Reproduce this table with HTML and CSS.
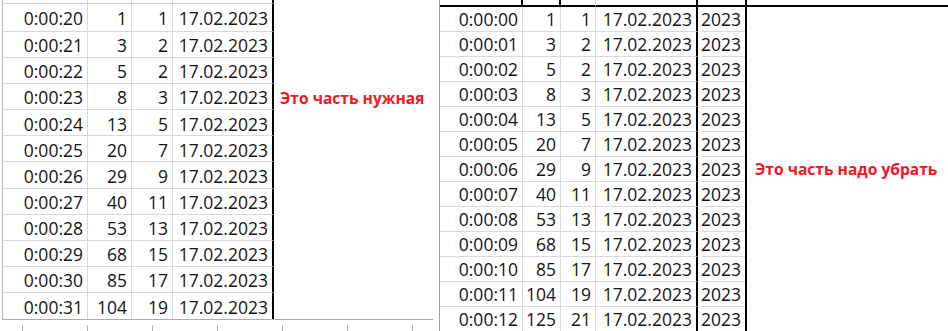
FILE: index.html
```html
<!DOCTYPE html>
<html lang="ru">
<head>
<meta charset="utf-8">
<title>Таблица</title>
<link rel="stylesheet" href="styles.css">
</head>
<body>
<div class="page">
  <section class="sheet sheet-left">
    <div class="grid grid-left">
      <div class="row head"><div class="c"></div><div class="c"></div><div class="c"></div><div class="c"></div><div class="c x"></div></div>
      <div class="row"><div class="c">0:00:20</div><div class="c">1</div><div class="c">1</div><div class="c">17.02.2023</div><div class="c x"></div></div>
      <div class="row"><div class="c">0:00:21</div><div class="c">3</div><div class="c">2</div><div class="c">17.02.2023</div><div class="c x"></div></div>
      <div class="row"><div class="c">0:00:22</div><div class="c">5</div><div class="c">2</div><div class="c">17.02.2023</div><div class="c x"></div></div>
      <div class="row"><div class="c">0:00:23</div><div class="c">8</div><div class="c">3</div><div class="c">17.02.2023</div><div class="c x note note-left">Это часть нужная</div></div>
      <div class="row"><div class="c">0:00:24</div><div class="c">13</div><div class="c">5</div><div class="c">17.02.2023</div><div class="c x"></div></div>
      <div class="row"><div class="c">0:00:25</div><div class="c">20</div><div class="c">7</div><div class="c">17.02.2023</div><div class="c x"></div></div>
      <div class="row"><div class="c">0:00:26</div><div class="c">29</div><div class="c">9</div><div class="c">17.02.2023</div><div class="c x"></div></div>
      <div class="row"><div class="c">0:00:27</div><div class="c">40</div><div class="c">11</div><div class="c">17.02.2023</div><div class="c x"></div></div>
      <div class="row"><div class="c">0:00:28</div><div class="c">53</div><div class="c">13</div><div class="c">17.02.2023</div><div class="c x"></div></div>
      <div class="row"><div class="c">0:00:29</div><div class="c">68</div><div class="c">15</div><div class="c">17.02.2023</div><div class="c x"></div></div>
      <div class="row"><div class="c">0:00:30</div><div class="c">85</div><div class="c">17</div><div class="c">17.02.2023</div><div class="c x"></div></div>
      <div class="row last"><div class="c">0:00:31</div><div class="c">104</div><div class="c">19</div><div class="c">17.02.2023</div><div class="c x"></div></div>
    </div>
    <div class="foot"></div>
  </section>

  <section class="sheet sheet-right">
    <div class="grid grid-right">
      <div class="row head"><div class="c"></div><div class="c"></div><div class="c"></div><div class="c"></div><div class="c"></div><div class="c x"></div></div>
      <div class="row"><div class="c">0:00:00</div><div class="c">1</div><div class="c">1</div><div class="c">17.02.2023</div><div class="c">2023</div><div class="c x"></div></div>
      <div class="row"><div class="c">0:00:01</div><div class="c">3</div><div class="c">2</div><div class="c">17.02.2023</div><div class="c">2023</div><div class="c x"></div></div>
      <div class="row"><div class="c">0:00:02</div><div class="c">5</div><div class="c">2</div><div class="c">17.02.2023</div><div class="c">2023</div><div class="c x"></div></div>
      <div class="row"><div class="c">0:00:03</div><div class="c">8</div><div class="c">3</div><div class="c">17.02.2023</div><div class="c">2023</div><div class="c x"></div></div>
      <div class="row"><div class="c">0:00:04</div><div class="c">13</div><div class="c">5</div><div class="c">17.02.2023</div><div class="c">2023</div><div class="c x"></div></div>
      <div class="row"><div class="c">0:00:05</div><div class="c">20</div><div class="c">7</div><div class="c">17.02.2023</div><div class="c">2023</div><div class="c x"></div></div>
      <div class="row"><div class="c">0:00:06</div><div class="c">29</div><div class="c">9</div><div class="c">17.02.2023</div><div class="c">2023</div><div class="c x note note-right">Это часть надо убрать</div></div>
      <div class="row"><div class="c">0:00:07</div><div class="c">40</div><div class="c">11</div><div class="c">17.02.2023</div><div class="c">2023</div><div class="c x"></div></div>
      <div class="row"><div class="c">0:00:08</div><div class="c">53</div><div class="c">13</div><div class="c">17.02.2023</div><div class="c">2023</div><div class="c x"></div></div>
      <div class="row"><div class="c">0:00:09</div><div class="c">68</div><div class="c">15</div><div class="c">17.02.2023</div><div class="c">2023</div><div class="c x"></div></div>
      <div class="row"><div class="c">0:00:10</div><div class="c">85</div><div class="c">17</div><div class="c">17.02.2023</div><div class="c">2023</div><div class="c x"></div></div>
      <div class="row"><div class="c">0:00:11</div><div class="c">104</div><div class="c">19</div><div class="c">17.02.2023</div><div class="c">2023</div><div class="c x"></div></div>
      <div class="row"><div class="c">0:00:12</div><div class="c">125</div><div class="c">21</div><div class="c">17.02.2023</div><div class="c">2023</div><div class="c x"></div></div>
    </div>
  </section>
</div>
</body>
</html>
```

FILE: styles.css
```css
html, body {
  margin: 0;
  padding: 0;
  background: #ffffff;
}

.page {
  display: flex;
  width: 948px;
  height: 331px;
  overflow: hidden;
  font-family: "Open Sans", "Noto Sans", sans-serif;
  font-size: 17.5px;
  color: #141414;
}

.sheet {
  height: 331px;
  overflow: hidden;
  display: flex;
  flex-direction: column;
}

.sheet-left {
  width: 439px;
  flex: none;
}

.sheet-right {
  flex: 1;
  border-left: 1px solid #9c9c9c;
}

.grid {
  display: grid;
}

.row {
  display: contents;
}

.c {
  box-sizing: border-box;
  display: flex;
  align-items: center;
  justify-content: flex-end;
  padding-right: 4px;
  white-space: nowrap;
  line-height: 1;
  border-right: 1px solid #d9d9d9;
  border-bottom: 1px solid #d9d9d9;
}

.c.x {
  border-right: none;
  border-bottom: none;
}

/* ---------- left sheet ---------- */
.grid-left {
  margin-left: 2px;
  grid-template-columns: 86px 44px 41px 101px 1fr;
  grid-template-rows: 4px 28px repeat(11, 26.1px);
}

.grid-left .c {
  padding-top: 3px;
}

.grid-left .head > .c {
  padding-top: 0;
  border-bottom-color: #cfcfcf;
}

.grid-left .row > :first-child {
  border-left: 1px solid #b4b4b4;
}

.grid-left .row > :nth-child(4) {
  border-right: 2px solid #000000;
}

.grid-left .last > .c {
  border-bottom: none;
}

.foot {
  margin-left: 2px;
  width: 431px;
  height: 12px;
  box-sizing: border-box;
  border-top: 1px solid #ababab;
  background-image: linear-gradient(to right, transparent 20px, #b0b0b0 20px, #b0b0b0 21px, transparent 21px);
  background-size: 65px 6px;
  background-repeat: repeat-x;
  background-position: 0 100%;
}

/* ---------- right sheet ---------- */
.grid-right {
  grid-template-columns: 83px 38px 35px 102px 49px 1fr;
  grid-template-rows: 7px repeat(13, 25px);
}

.grid-right .c {
  padding-top: 1px;
}

.grid-right .head > .c {
  padding-top: 0;
}

.grid-right .row > :nth-child(4) {
  border-right: 2px solid #000000;
}

.grid-right .row > :nth-child(5) {
  border-right: 2px solid #000000;
  border-bottom: none;
  background-image: linear-gradient(#d9d9d9, #d9d9d9);
  background-repeat: no-repeat;
  background-position: right bottom;
  background-size: calc(100% - 4px) 1px;
}

.grid-right .head > .c {
  border-bottom: 2px solid #000000;
  background-image: none;
}

.grid-right .head > :nth-child(1),
.grid-right .head > :nth-child(2) {
  border-right: 2px solid #000000;
}

/* ---------- red notes ---------- */
.note {
  justify-content: flex-start;
  padding-right: 0;
  overflow: visible;
  font-weight: 700;
  font-size: 15.6px;
  color: #f5141f;
}

.note-left {
  padding-left: 6px;
}

.note-right {
  padding-left: 8px;
}
```
